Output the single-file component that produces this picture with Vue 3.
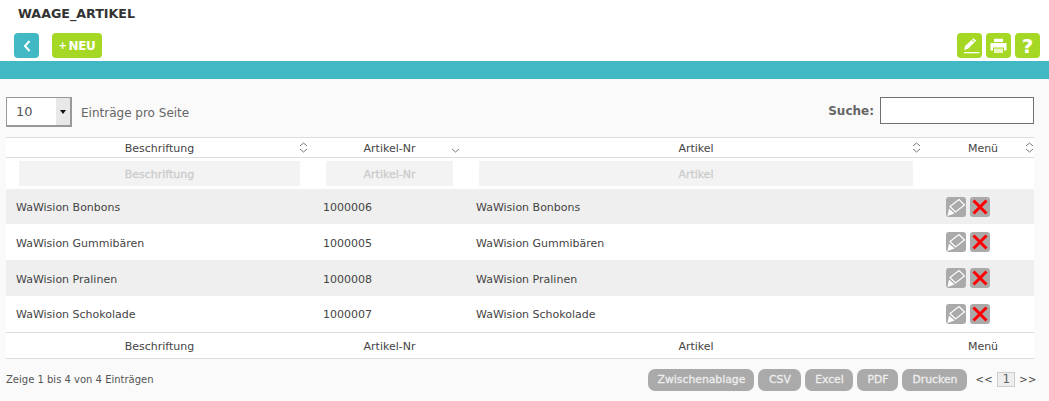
<script setup>
const heads = ['Beschriftung', 'Artikel-Nr', 'Artikel', 'Menü']
const rows = [
  ['WaWision Bonbons', '1000006', 'WaWision Bonbons', 'r35'],
  ['WaWision Gummibären', '1000005', 'WaWision Gummibären', 'r36'],
  ['WaWision Pralinen', '1000008', 'WaWision Pralinen', 'r36'],
  ['WaWision Schokolade', '1000007', 'WaWision Schokolade', 'r36'],
]
const exportButtons = [
  { label: 'Zwischenablage', width: 106 },
  { label: 'CSV', width: 43 },
  { label: 'Excel', width: 48 },
  { label: 'PDF', width: 41 },
  { label: 'Drucken', width: 65 },
]
</script>

<template>
  <div class="page">
    <header class="top">
      <h1 class="title">WAAGE_ARTIKEL</h1>
      <div class="toolbar">
        <div class="left">
          <button class="btn teal">
            <svg width="10" height="14" viewBox="0 0 10 14"><path d="M7.5 2 L3 7 L7.5 12" fill="none" stroke="#fff" stroke-width="2"/></svg>
          </button>
          <button class="btn green neu"><span class="plus">+</span>NEU</button>
        </div>
        <div class="right">
          <button class="btn green">
            <svg width="25" height="25" viewBox="0 0 25 25"><path d="M7.2 17 L8 13 L16.5 5.2 L19.2 7.8 L11 15.8 Z" fill="#fff"/><path d="M15 6.8 L17.6 9.3" stroke="#a4d824" stroke-width="1"/><rect x="7" y="19" width="15.3" height="1.3" fill="#fff"/></svg>
          </button>
          <button class="btn green">
            <svg width="25" height="25" viewBox="0 0 25 25"><path d="M8 5.7 H17 V9 H8 Z M4.5 10 H20.5 V17.5 H18 V14.5 H7 V17.5 H4.5 Z" fill="#fff"/><path d="M8 15.5 H17 V20 H8 Z" fill="#eaf6c4"/></svg>
          </button>
          <button class="btn green help">?</button>
        </div>
      </div>
    </header>
    <div class="band"></div>
    <main class="content">
      <div class="controls">
        <div class="length">
          <div class="select"><span class="val">10</span><span class="arrow"></span></div>
          <span class="label">Einträge pro Seite</span>
        </div>
        <div class="search"><b>Suche:</b><div class="search-box"></div></div>
      </div>
      <table class="tbl">
        <colgroup><col class="c1" /><col class="c2" /><col class="c3" /><col class="c4" /></colgroup>
        <thead>
          <tr class="head">
            <th v-for="(h, i) in heads" :key="h" :class="{ menu: i === 3 }">
              <span>{{ h }}</span>
              <svg v-if="i !== 1" class="sort" width="9" height="11" viewBox="0 0 9 11"><path d="M1 4 L4.5 1 L8 4 M1 7 L4.5 10 L8 7" fill="none" stroke="#777" stroke-width="1"/></svg>
              <svg v-else class="sort one" width="9" height="5" viewBox="0 0 9 5"><path d="M1 1 L4.5 4 L8 1" fill="none" stroke="#777" stroke-width="1"/></svg>
            </th>
          </tr>
          <tr class="filter">
            <td v-for="h in heads.slice(0, 3)" :key="h"><div class="finput">{{ h }}</div></td>
            <td></td>
          </tr>
        </thead>
        <tbody>
          <tr v-for="(r, i) in rows" :key="r[1]" :class="[r[3], { odd: i % 2 === 0 }]">
            <td>{{ r[0] }}</td>
            <td>{{ r[1] }}</td>
            <td>{{ r[2] }}</td>
            <td class="actcell">
              <div class="acts">
                <span class="act">
                  <svg width="20" height="20" viewBox="0 0 20 20"><path d="M4 9.5 L13 2.5 L18.5 8 L9.5 15 Z" fill="none" stroke="#fff" stroke-width="1.1"/><path d="M1.5 19 L3 11.5 L8.5 16.5 Z" fill="#fff"/></svg>
                </span>
                <span class="act">
                  <svg width="20" height="20" viewBox="0 0 20 20"><path d="M3.5 3.5 L16.5 16.5 M16.5 3.5 L3.5 16.5" stroke="#f00" stroke-width="3"/></svg>
                </span>
              </div>
            </td>
          </tr>
        </tbody>
        <tfoot>
          <tr class="foot"><th v-for="(h, i) in heads" :key="h" :class="{ menu: i === 3 }">{{ h }}</th></tr>
        </tfoot>
      </table>
      <div class="bottom">
        <span class="info">Zeige 1 bis 4 von 4 Einträgen</span>
        <div class="bottom-right">
          <button v-for="b in exportButtons" :key="b.label" class="exp" :style="{ width: b.width + 'px' }">{{ b.label }}</button>
          <div class="pager"><span class="pg">&lt;&lt;</span><span class="cur">1</span><span class="pg">&gt;&gt;</span></div>
        </div>
      </div>
    </main>
  </div>
</template>

<style>
html, body { margin: 0; background: #fff; }
</style>

<style scoped>
.page { width: 1049px; height: 401px; overflow: hidden; font-family: "DejaVu Sans", Verdana, sans-serif; font-size: 11px; color: #444; display: flex; flex-direction: column; }
.top { height: 61px; flex: none; box-sizing: border-box; padding: 6px 9px 0 14px; }
.title { margin: 0 0 0 4px; font-size: 12.65px; line-height: 15px; font-weight: bold; color: #333; }
.toolbar { display: flex; justify-content: space-between; margin-top: 12px; }
.left, .right { display: flex; }
.left { gap: 13px; }
.right { gap: 4px; }
.btn { width: 25px; height: 25px; padding: 0; border: 0; border-radius: 4px; display: flex; align-items: center; justify-content: center; color: #fff; font-family: inherit; }
.teal { background: #42b8c4; }
.green { background: #a4d824; }
.neu { width: 50px; font-size: 12px; font-weight: bold; letter-spacing: -0.4px; }
.plus { font-size: 10px; margin-right: 2px; }
.help { font-size: 20px; font-weight: bold; }
.band { height: 18px; flex: none; background: #42b8c4; }
.content { flex: none; height: 322px; background: #fafafa; padding: 0 15px 0 6px; }
.controls { display: flex; justify-content: space-between; align-items: flex-start; height: 58px; box-sizing: border-box; padding-top: 18px; }
.length { display: flex; align-items: center; gap: 9px; }
.select { width: 66px; height: 30px; box-sizing: border-box; background: #fff; border: 1px solid #999; border-right-width: 2px; border-bottom-width: 2px; display: flex; justify-content: space-between; align-items: center; }
.val { padding-left: 9px; font-size: 13px; color: #555; }
.arrow { width: 14px; height: 100%; background: #e8e8e8; display: flex; align-items: center; justify-content: center; }
.arrow::after { content: ""; border: 3px solid transparent; border-top: 4px solid #111; border-bottom: 0; }
.label { font-size: 12px; color: #666; padding-top: 1px; }
.search { display: flex; align-items: center; gap: 6px; font-size: 12px; color: #666; }
.search-box { width: 152px; height: 25px; background: #fff; border: 1px solid #707070; }
.tbl { width: 1028px; table-layout: fixed; border-collapse: collapse; background: #fff; }
.c1 { width: 307px; } .c2 { width: 153px; } .c3 { width: 460px; } .c4 { width: 108px; }
.tbl th { font-weight: normal; color: #444; position: relative; padding: 0; text-align: center; }
.tbl th.menu { padding-left: 6px; }
.head { height: 20px; }
.head th { border-top: 1px solid #ddd; border-bottom: 1px solid #ddd; padding-top: 2px; }
.sort { position: absolute; right: 5px; top: 4px; }
.sort.one { top: 10px; right: 6px; }
.menu .sort { right: 0; }
.filter { height: 31px; }
.filter td { padding: 3px 13px 3px; }
.finput { height: 25px; line-height: 27px; background: #f3f3f3; color: #ccc; text-align: center; -webkit-text-stroke: 0.3px #ccc; }
tbody td { padding: 2px 10px 0; color: #444; }
tbody td.actcell { padding-top: 0; }
.r35 { height: 35px; }
.r36 { height: 36px; }
.odd { background: #efefef; }
.acts { display: flex; gap: 4px; padding-left: 10px; }
.act { width: 20px; height: 20px; border-radius: 3px; background: #aaa; display: block; }
.act svg { display: block; }
.foot { height: 26px; }
.foot th { border-top: 1px solid #ddd; border-bottom: 1px solid #ddd; padding-top: 2px; }
.bottom { display: flex; justify-content: space-between; align-items: center; height: 42px; margin-right: -3px; }
.info { font-size: 10px; color: #555; }
.bottom-right { display: flex; align-items: center; gap: 4px; }
.exp { height: 22px; padding: 0; border: 0; border-radius: 7px; background: #aaa; color: #eee; font-family: inherit; font-size: 10.8px; -webkit-text-stroke: 0.3px #eee; }
.pager { display: flex; align-items: center; margin-left: 4px; font-size: 10px; color: #444; }
.pg { letter-spacing: 0.5px; }
.cur { width: 16px; height: 13px; line-height: 13px; margin: 0 4px; text-align: center; background: #eee; border: 1px solid #ccc; color: #666; font-size: 12px; }
</style>
